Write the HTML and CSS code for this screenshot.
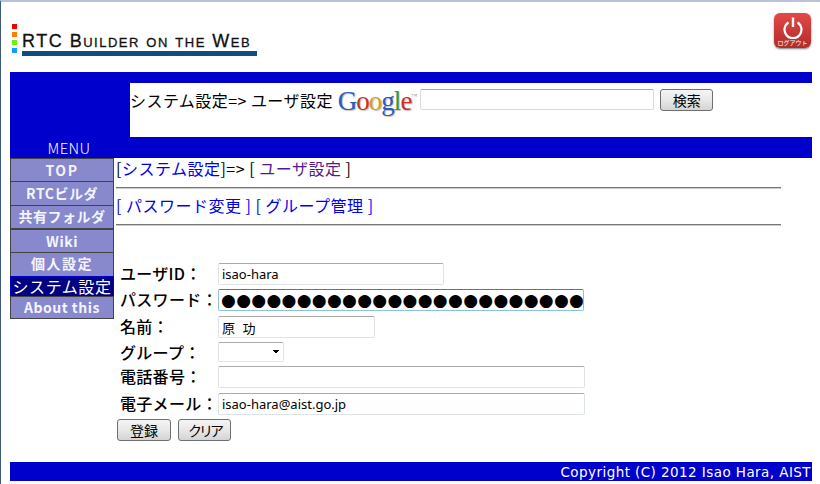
FILE: index.html
```html
<!DOCTYPE html>
<html lang="ja">
<head>
    <meta charset="UTF-8">
    <meta name="viewport" content="width=device-width, initial-scale=1.0">
    <title>RTC Builder on the Web</title>
    <link rel="stylesheet" href="styles.css">
</head>
<body>
    <div class="page">
        <header class="header">
            <div class="logo">
                <div class="logo-squares">
                    <span class="sq sq-red"></span>
                    <span class="sq sq-orange"></span>
                    <span class="sq sq-green"></span>
                    <span class="sq sq-blue"></span>
                </div>
                <div class="logo-main">
                    <div class="logo-text">RTC Builder on the Web</div>
                    <div class="logo-bar"></div>
                </div>
            </div>
            <a class="logout" href="#">
                <svg class="logout-icon" width="22" height="22" viewBox="0 0 22 22">
                    <path d="M6.5 5.5 A8.5 8.5 0 1 0 15.5 5.5" fill="none" stroke="#fff" stroke-width="2.2"/>
                    <path d="M11 0.5 V10" fill="none" stroke="#fff" stroke-width="2.4"/>
                </svg>
                <span class="logout-label">ログアウト</span>
            </a>
        </header>

        <div class="topbar">
            <div class="menu-label">MENU</div>
            <div class="search-panel">
                <span class="crumb-title">システム設定=&gt; ユーザ設定</span>
                <span class="google"><b class="g-b">G</b><b class="g-r">o</b><b class="g-y">o</b><b class="g-b">g</b><b class="g-g">l</b><b class="g-r">e</b><small class="g-tm">™</small></span>
                <input class="search-input" type="text">
                <button class="btn btn-search">検索</button>
            </div>
        </div>

        <div class="main">
            <ul class="menu">
                <li class="menu-item menu-item-top">TOP</li>
                <li class="menu-item menu-item-tall">RTCビルダ</li>
                <li class="menu-item menu-item-sep">共有フォルダ</li>
                <li class="menu-item">Wiki</li>
                <li class="menu-item menu-item-tall menu-item-spaced">個人設定</li>
                <li class="menu-item menu-item-active">システム設定</li>
                <li class="menu-item menu-item-last">About this</li>
            </ul>
            <div class="content">
                <div class="crumbs">[<a href="#">システム設定</a>]=&gt; [ <a class="visited" href="#">ユーザ設定</a> ]</div>
                <hr class="rule rule-first">
                <div class="sublinks"><a href="#">[ パスワード変更 ]</a> <a href="#">[ グループ管理 ]</a></div>
                <hr class="rule rule-second">
                <form class="user-form">
                    <label class="form-label">ユーザID：</label>
                    <input class="field field-id" type="text" value="isao-hara">
                    <label class="form-label">パスワード：</label>
                    <div class="field field-password"><span class="dots">●●●●●●●●●●●●●●●●●●●●●●●●</span></div>
                    <label class="form-label">名前：</label>
                    <input class="field field-name" type="text" value="原 功">
                    <label class="form-label">グループ：</label>
                    <select class="field field-group"><option></option></select>
                    <label class="form-label">電話番号：</label>
                    <input class="field field-wide" type="text">
                    <label class="form-label">電子メール：</label>
                    <input class="field field-wide" type="text" value="isao-hara@aist.go.jp">
                </form>
                <div class="form-buttons">
                    <button class="btn btn-save">登録</button>
                    <button class="btn btn-clear">クリア</button>
                </div>
            </div>
        </div>

        <footer class="footer">Copyright (C) 2012 Isao Hara, AIST</footer>
    </div>
</body>
</html>
```

FILE: styles.css
```css
html, body {
    margin: 0;
    padding: 0;
}

body {
    font-family: "Noto Sans CJK JP", "Liberation Sans", sans-serif;
    background-color: #fff;
    color: #000;
    height: 484px;
    overflow: hidden;
    box-sizing: border-box;
    border-top: 2px solid #b9c2d6;
    border-left: 1px solid #3c5a78;
}

.page {
    padding: 0 8px 0 9px;
}

/* header */
.header {
    height: 70px;
    display: flex;
    justify-content: space-between;
    align-items: flex-start;
}

.logo {
    display: flex;
    padding: 22px 0 0 2px;
}

.logo-squares {
    display: flex;
    flex-direction: column;
    gap: 3px;
    margin-right: 5px;
}

.sq {
    width: 5px;
    height: 5px;
}

.sq-red { background-color: #f00000; }
.sq-orange { background-color: #ff7a10; }
.sq-green { background-color: #70f010; }
.sq-blue { background-color: #10a0ff; }

.logo-main {
    padding-top: 10px;
}

.logo-text {
    font-family: "Liberation Sans", sans-serif;
    font-variant: small-caps;
    font-size: 18px;
    line-height: 15px;
    letter-spacing: 1.5px;
    color: #111;
    -webkit-text-stroke: 0.3px #111;
    white-space: nowrap;
}

.logo-bar {
    width: 235px;
    height: 5px;
    margin-top: 2px;
    background-color: #0f4c81;
}

.logout {
    width: 37px;
    height: 35px;
    margin: 11px 1px 0 0;
    border-radius: 6px;
    background: linear-gradient(180deg, #e24a46, #b02c2c);
    box-shadow: 0 1px 2px rgba(0, 0, 0, 0.5);
    display: flex;
    flex-direction: column;
    align-items: center;
    text-decoration: none;
}

.logout-icon {
    margin-top: 4px;
}

.logout-label {
    font-size: 6px;
    line-height: 7px;
    color: #fff;
    white-space: nowrap;
}

/* blue bar */
.topbar {
    height: 86px;
    background-color: #0000cc;
    position: relative;
    padding: 11px 0 0 120px;
    box-sizing: border-box;
}

.menu-label {
    position: absolute;
    left: 0;
    bottom: 1px;
    width: 118px;
    text-align: center;
    color: #fff;
    font-size: 15px;
    font-weight: 300;
    line-height: 18px;
    letter-spacing: 0.3px;
}

.search-panel {
    height: 54px;
    background-color: #fff;
    display: flex;
    align-items: flex-start;
    white-space: nowrap;
}

.crumb-title {
    font-size: 16px;
    line-height: 34px;
    letter-spacing: 0.45px;
}

.google {
    font-family: "Liberation Serif", serif;
    font-size: 27px;
    line-height: 27px;
    margin: 0 3px 0 5px;
    letter-spacing: -1px;
    text-shadow: 1px 1px 1px rgba(0, 0, 0, 0.25);
}

.google b { font-weight: normal; }
.g-b { color: #2a5cc0; }
.g-r { color: #c9302a; }
.g-y { color: #d4a017; }
.g-g { color: #3a9a3a; }

.g-tm {
    font-size: 6px;
    color: #999;
    vertical-align: 12px;
    letter-spacing: 0;
    text-shadow: none;
}

.search-input {
    width: 234px;
    height: 21px;
    margin: 6px 6px 0 0;
    padding: 0;
    box-sizing: border-box;
    border: 1px solid #d5dbe3;
    border-top-color: #aaa;
    border-radius: 2px;
}

.btn {
    height: 22px;
    padding: 0;
    box-sizing: border-box;
    border: 1px solid #707070;
    border-radius: 3px;
    background: linear-gradient(180deg, #f4f4f4 0%, #e8e8e8 50%, #d4d4d4 100%);
    font-family: "Noto Sans CJK JP", sans-serif;
    font-size: 14px;
    line-height: 18px;
    color: #000;
}

.btn-search {
    width: 53px;
    margin-top: 6px;
}

/* menu + content */
.main {
    display: flex;
    height: 304px;
}

.menu {
    width: 104px;
    margin: 0;
    padding: 0;
    list-style: none;
    flex-shrink: 0;
}

.menu-item {
    height: 23px;
    box-sizing: border-box;
    background-color: #8888cc;
    border: 1px solid #444;
    border-bottom: 0;
    color: #f4f4ff;
    font-size: 14px;
    font-weight: 700;
    line-height: 22px;
    text-align: center;
    letter-spacing: 0.5px;
    white-space: nowrap;
}

.menu-item-top {
    letter-spacing: 1.5px;
}

.menu-item-tall {
    height: 24px;
}

.menu-item-spaced {
    letter-spacing: 1.5px;
    line-height: 20px;
}

.menu-item-sep {
    height: 24px;
    border-bottom: 1px solid #444;
    line-height: 20px;
}

.menu-item-active {
    height: 20px;
    background-color: #000080;
    border-color: #0000cc;
    color: #fff;
    font-size: 16px;
    font-weight: 400;
    line-height: 18px;
    letter-spacing: 0.6px;
}

.menu-item-last {
    height: 23px;
    border-bottom: 1px solid #444;
    line-height: 20px;
}

.content {
    width: 665px;
    margin-left: 2px;
}

.content a {
    color: #0000ee;
    text-decoration: none;
}

.content a.visited {
    color: #551a8b;
}

.crumbs {
    font-size: 16px;
    line-height: 21px;
    letter-spacing: 0.5px;
    white-space: nowrap;
}

.rule {
    margin: 0;
    border: 0;
    border-top: 1px solid #777;
    border-bottom: 1px solid #ccc;
}

.rule-first {
    margin-top: 8px;
}

.rule-second {
    margin-top: 8px;
}

.sublinks {
    font-size: 16px;
    line-height: 22px;
    margin-top: 5px;
    letter-spacing: 0.5px;
    white-space: nowrap;
}

.user-form {
    display: grid;
    grid-template-columns: 98px auto;
    grid-template-rows: 22px 23px 22px 20px 23px 22px;
    justify-content: start;
    justify-items: start;
    row-gap: 4px;
    margin: 37px 0 0 4px;
}

.form-label {
    align-self: start;
    font-size: 16px;
    font-weight: 500;
    line-height: 21px;
    letter-spacing: 0.3px;
    white-space: nowrap;
}

.field {
    height: 22px;
    margin: 0;
    padding: 0 3px;
    box-sizing: border-box;
    border: 1px solid #dfe4ea;
    border-top-color: #aaa;
    border-radius: 2px;
    background-color: #fff;
    font-family: "Noto Sans", "Noto Sans CJK JP", sans-serif;
    font-size: 13px;
}

.field-id { width: 226px; }
.field-wide { width: 367px; }

.field-name {
    width: 157px;
    letter-spacing: 2px;
}

.field-group {
    width: 66px;
    height: 20px;
    padding: 0;
    appearance: none;
    background-image: linear-gradient(45deg, transparent 50%, #000 50%), linear-gradient(-45deg, transparent 50%, #000 50%);
    background-size: 4px 4px;
    background-repeat: no-repeat;
    background-position: 53px 7px, 57px 7px;
}

.field-password {
    width: 366px;
    border: 1px solid #8fc0e0;
    border-top-color: #3a80b0;
    padding: 0 0 0 2px;
    font-family: "DejaVu Sans", sans-serif;
    font-size: 17px;
    line-height: 20px;
    white-space: nowrap;
    overflow: hidden;
}

.dots {
    display: inline-block;
    height: 18px;
    line-height: 18px;
    letter-spacing: 0.3px;
    border-right: 1px solid #000;
    vertical-align: top;
    margin-top: 1px;
}

.form-buttons {
    display: flex;
    gap: 7px;
    margin: 4px 0 0 1px;
}

.btn-save { width: 54px; }

.btn-clear {
    width: 53px;
    letter-spacing: -3px;
}

/* footer */
.footer {
    height: 19px;
    background-color: #0000cc;
    color: #fff;
    font-family: "DejaVu Sans", sans-serif;
    font-size: 13.5px;
    line-height: 20px;
    letter-spacing: 0.43px;
    text-align: right;
    padding-right: 1px;
    white-space: nowrap;
}
```
